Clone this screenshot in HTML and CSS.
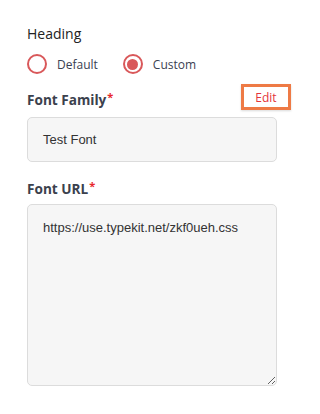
FILE: index.html
```html
<!DOCTYPE html>
<html>
<head>
<meta charset="utf-8">
<link rel="stylesheet" href="styles.css">
</head>
<body>
<div class="form">
  <div class="heading">Heading</div>
  <div class="radios">
    <label class="radio"><span class="circle"></span><span class="rtext">Default</span></label>
    <label class="radio"><span class="circle checked"></span><span class="rtext">Custom</span></label>
  </div>
  <div class="label-row">
    <div class="label">Font Family<span class="req">*</span></div>
    <button class="edit">Edit</button>
  </div>
  <div class="input">Test Font</div>
  <div class="label url-label">Font URL<span class="req">*</span></div>
  <textarea class="textarea">https://use.typekit.net/zkf0ueh.css</textarea>
</div>
</body>
</html>
```
FILE: styles.css
```css
html, body {
  margin: 0;
  padding: 0;
  background: #ffffff;
}
.form {
  padding: 24px 0 0 27px;
  font-family: "Open Sans", "Noto Sans", sans-serif;
}
.heading {
  font-size: 14px;
  line-height: 20px;
  color: #222222;
}
.radios {
  display: flex;
  align-items: center;
  margin-top: 10px;
  height: 20px;
}
.radio {
  display: flex;
  align-items: center;
  margin-right: 25px;
}
.circle {
  box-sizing: border-box;
  width: 20px;
  height: 20px;
  border: 2px solid #d9585a;
  border-radius: 50%;
  display: flex;
  align-items: center;
  justify-content: center;
}
.circle.checked::after {
  content: "";
  width: 11px;
  height: 11px;
  border-radius: 50%;
  background: #d9585a;
}
.rtext {
  margin-left: 10px;
  font-size: 12px;
  color: #3a4152;
}
.label-row {
  display: flex;
  justify-content: space-between;
  align-items: flex-end;
  width: 264px;
  margin-top: 10px;
}
.label {
  font-size: 13.6px;
  font-weight: 700;
  line-height: 20px;
  color: #3b414d;
}
.req {
  color: #e8262b;
  font-size: 11px;
  vertical-align: top;
  position: relative;
  top: -3px;
  margin-left: 1px;
}
.edit {
  box-sizing: border-box;
  width: 50px;
  height: 26px;
  border: 3px solid #ee7a45;
  background: #ffffff;
  color: #e5343a;
  font-family: "Open Sans", "Noto Sans", sans-serif;
  font-size: 12px;
  padding: 0;
  box-shadow: 0 1px 2px rgba(0,0,0,0.15);
}
.input {
  box-sizing: border-box;
  width: 250px;
  height: 45px;
  margin-top: 7px;
  padding: 0 15px;
  display: flex;
  align-items: center;
  background: #f6f6f6;
  border: 1px solid #dcdcdc;
  border-radius: 5px;
  font-family: "Liberation Sans", Arial, sans-serif;
  font-size: 13px;
  color: #333333;
}
.url-label {
  margin-top: 17px;
}
.textarea {
  display: block;
  box-sizing: border-box;
  width: 250px;
  height: 182px;
  margin: 5px 0 0 0;
  padding: 13px 15px;
  background: #f6f6f6;
  border: 1px solid #dcdcdc;
  border-radius: 5px;
  font-family: "Liberation Sans", Arial, sans-serif;
  font-size: 13px;
  line-height: 20px;
  color: #333333;
  outline: none;
}
```
